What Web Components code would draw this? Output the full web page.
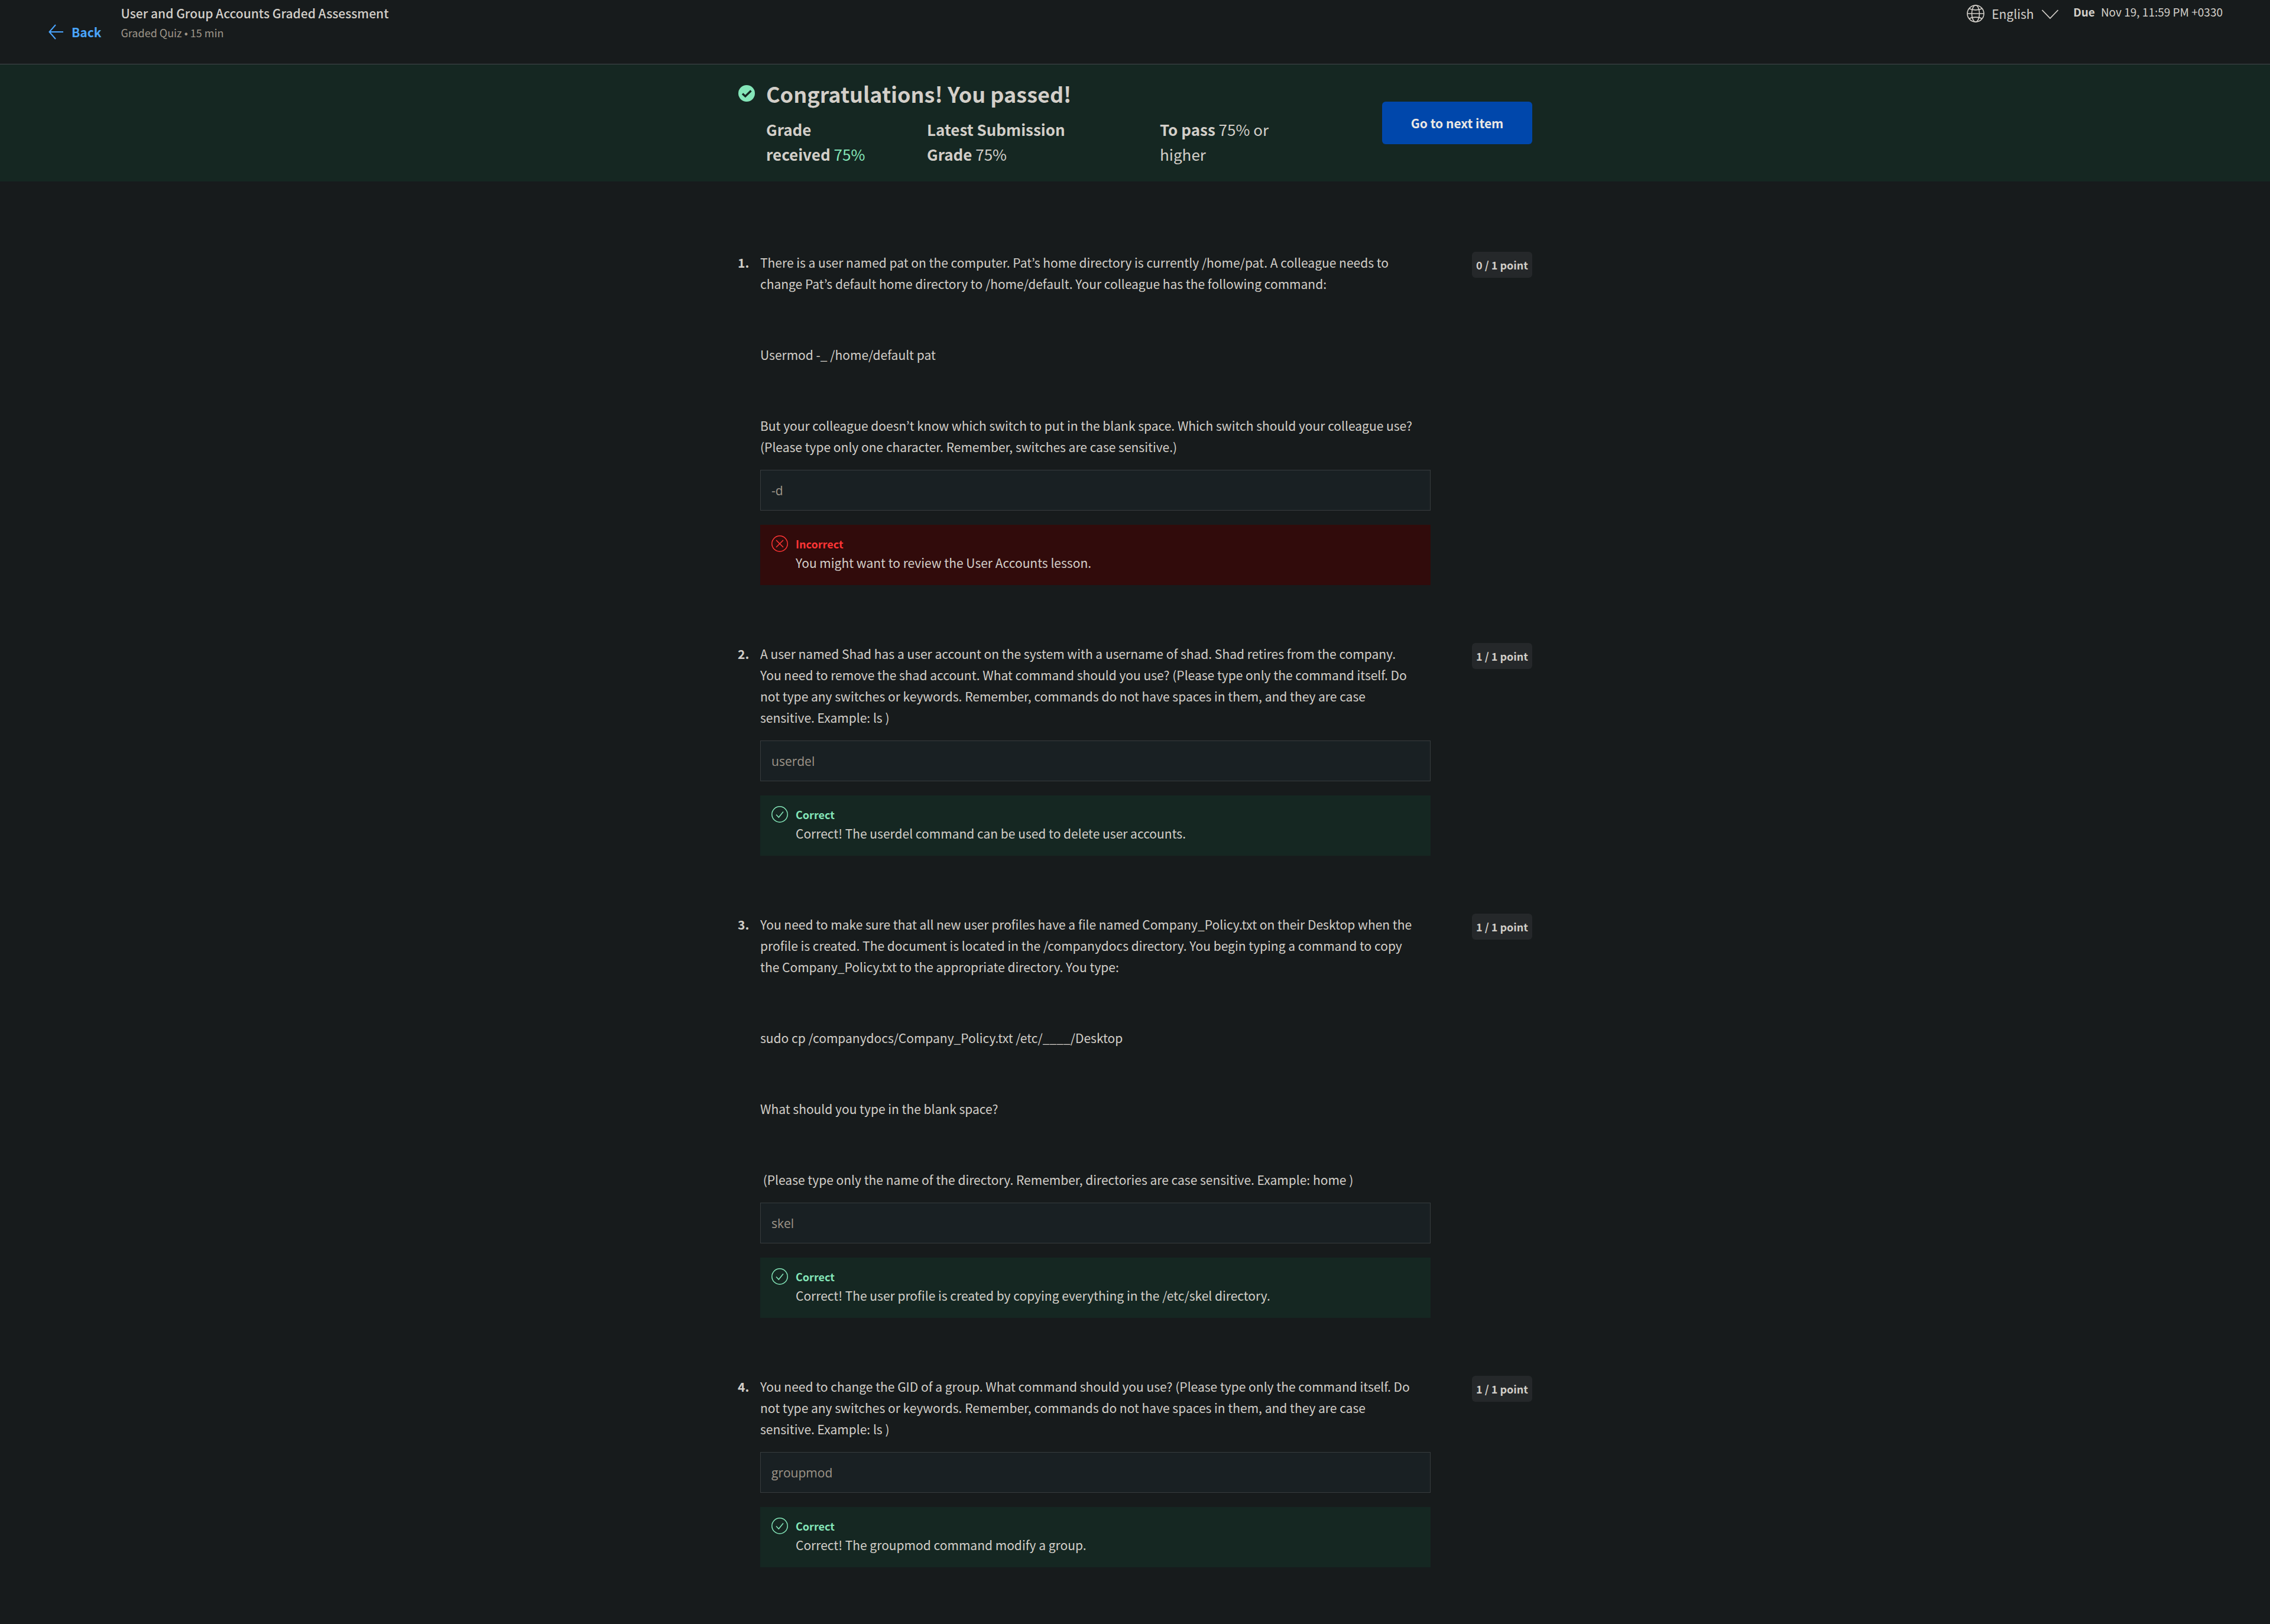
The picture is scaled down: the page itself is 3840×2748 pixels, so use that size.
<!DOCTYPE html>
<html lang="en">
<head>
<meta charset="utf-8">
<meta name="viewport" content="width=device-width, initial-scale=1">
<title>User and Group Accounts Graded Assessment</title>
<style>
  :root {
    --bg: #171b1c;
    --text: #d3cfc9;
    --muted: #9e9589;
    --link: #4aa5ff;
    --green: #84e6b9;
    --green-bg: #152722;
    --red: #ff3535;
    --red-bg: #310b0b;
    --line: #43484b;
    --field-bg: #192023;
    --field-line: #373c3e;
    --chip-bg: #25282a;
    --primary: #0047ab;
  }
  body {
    margin: 0;
    background: var(--bg);
    color: var(--text);
    font: 400 21px/36px "Noto Sans CJK KR", "Noto Sans", sans-serif;
  }
</style>
</head>
<body>
<quiz-header heading="User and Group Accounts Graded Assessment" detail="Graded Quiz • 15 min" due="Nov 19, 11:59 PM +0330"></quiz-header>
<main>
  <grade-banner heading="Congratulations! You passed!">
    <grade-stat lead="Grade" label="received" value="75%" tone="good"></grade-stat>
    <grade-stat lead="Latest Submission" label="Grade" value="75%"></grade-stat>
    <grade-stat label="To pass" value="75%" note="or higher"></grade-stat>
  </grade-banner>
  <quiz-list>
    <quiz-question number="1" points="0 / 1 point" answer="-d">
      <p>There is a user named pat on the computer. Pat’s home directory is currently /home/pat. A colleague needs to change Pat’s default home directory to /home/default. Your colleague has the following command:</p>
      <p>Usermod -_ /home/default pat</p>
      <p>But your colleague doesn’t know which switch to put in the blank space. Which switch should your colleague use? (Please type only one character. Remember, switches are case sensitive.)</p>
      <answer-feedback slot="feedback" state="incorrect">You might want to review the User Accounts lesson.</answer-feedback>
    </quiz-question>
    <quiz-question number="2" points="1 / 1 point" answer="userdel">
      <p>A user named Shad has a user account on the system with a username of shad. Shad retires from the company. You need to remove the shad account. What command should you use? (Please type only the command itself. Do not type any switches or keywords. Remember, commands do not have spaces in them, and they are case sensitive. Example: ls )</p>
      <answer-feedback slot="feedback" state="correct">Correct! The userdel command can be used to delete user accounts.</answer-feedback>
    </quiz-question>
    <quiz-question number="3" points="1 / 1 point" answer="skel">
      <p>You need to make sure that all new user profiles have a file named Company_Policy.txt on their Desktop when the profile is created. The document is located in the /companydocs directory. You begin typing a command to copy the Company_Policy.txt to the appropriate directory. You type:</p>
      <p>sudo cp /companydocs/Company_Policy.txt /etc/____/Desktop</p>
      <p>What should you type in the blank space?</p>
      <p>&nbsp;(Please type only the name of the directory. Remember, directories are case sensitive. Example: home )</p>
      <answer-feedback slot="feedback" state="correct">Correct! The user profile is created by copying everything in the /etc/skel directory.</answer-feedback>
    </quiz-question>
    <quiz-question number="4" points="1 / 1 point" answer="groupmod">
      <p>You need to change the GID of a group. What command should you use? (Please type only the command itself. Do not type any switches or keywords. Remember, commands do not have spaces in them, and they are case sensitive. Example: ls )</p>
      <answer-feedback slot="feedback" state="correct">Correct! The groupmod command modify a group.</answer-feedback>
    </quiz-question>
  </quiz-list>
</main>
<script>
  class BaseElement extends HTMLElement {
    connectedCallback() {
      if (this.shadowRoot) return;
      this.attachShadow({ mode: 'open' }).innerHTML =
        '<style>*{box-sizing:border-box}svg{display:block;flex:none;fill:none;stroke:currentColor}' +
        this.css() + '</style>' + this.html();
    }
    attr(name) { return this.getAttribute(name) || ''; }
  }

  customElements.define('quiz-header', class extends BaseElement {
    css() { return `
      :host { display: block; border-bottom: 1px solid var(--line); }
      header { display: flex; align-items: flex-start; min-height: 108px; padding: 5px 80px 0 82px; }
      .back { display: flex; align-items: center; gap: 14px; margin: 31px 33px 0 0;
        color: var(--link); font-weight: 700; text-decoration: none; }
      .titles { flex: 1; min-width: 0; }
      h1 { margin: 0; font-size: 21px; line-height: 34px; font-weight: 500; }
      .detail { margin: 0; font-size: 18px; line-height: 32px; color: var(--muted); }
      .language { display: flex; align-items: center; gap: 12px; margin-right: 24px; }
      select { appearance: none; border: 0; margin: 0; padding: 0; background: none;
        color: inherit; font: inherit; height: 36px; }
      .due { display: flex; gap: 10px; margin: 0; font-size: 19px; line-height: 30px; }
      .due dt { font-weight: 700; } .due dd { margin: 0; }`; }
    html() { return `
      <header>
        <a class="back" href="#back">
          <svg width="25" height="26" viewBox="0 0 25 26" stroke-width="2"><path d="M12 1 1.500 13 12 25M1.500 13H25"/></svg>
          Back
        </a>
        <div class="titles"><h1>${this.attr('heading')}</h1><p class="detail">${this.attr('detail')}</p></div>
        <label class="language">
          <svg width="30" height="30" viewBox="0 0 30 30" stroke-width="1.600" role="img" aria-label="Language">
            <circle cx="15" cy="15" r="14"/><ellipse cx="15" cy="15" rx="6.500" ry="14"/>
            <path d="M1 15h28M4 6.500c6 3.200 16 3.200 22 0M4 23.500c6-3.200 16-3.200 22 0"/>
          </svg>
          <select><option>English</option></select>
          <svg width="30" height="30" viewBox="0 0 30 30" stroke-width="1.800"><path d="M1.500 9 15 23 28.500 9"/></svg>
        </label>
        <dl class="due"><dt>Due</dt><dd>${this.attr('due')}</dd></dl>
      </header>`; }
  });

  customElements.define('grade-banner', class extends BaseElement {
    css() { return `
      :host { display: block; background: var(--green-bg); }
      section { display: flex; align-items: center; max-width: 1344px; margin: 0 auto; padding: 25px 0; }
      .result { flex: 1; display: grid; grid-template-columns: 30px 1fr; column-gap: 18px; row-gap: 16px; align-items: center; }
      svg { stroke: none; color: var(--green); }
      h2 { margin: 0; font-size: 36px; line-height: 48px; font-weight: 700; }
      .stats { grid-column: 2; display: grid; grid-template-columns: 224px 346px 200px; column-gap: 48px; }
      button { flex: none; min-width: 254px; height: 72px; padding: 0 48px; border: 0; border-radius: 6px; background: var(--primary);
        color: #ece8e4; font: inherit; font-weight: 700; }`; }
    html() { return `
      <section>
        <div class="result">
          <svg width="30" height="30" viewBox="0 0 30 30"><circle cx="15" cy="15" r="14" fill="currentColor"/>
            <path d="m8 15.500 4.800 4.500L22.500 10.500" fill="none" stroke="var(--green-bg)" stroke-width="3.400"/></svg>
          <h2>${this.attr('heading')}</h2>
          <div class="stats"><slot></slot></div>
        </div>
        <button type="button">Go to next item</button>
      </section>`; }
  });

  customElements.define('grade-stat', class extends BaseElement {
    css() { return `
      :host { display: block; font-size: 26px; line-height: 42px; }
      b { font-weight: 700; }
      :host([tone="good"]) span { color: var(--green); }`; }
    html() {
      const lead = this.attr('lead');
      return `${lead ? `<b>${lead}</b> ` : ''}<b>${this.attr('label')}</b>&nbsp;<span>${this.attr('value')}</span> ${this.attr('note')}`;
    }
  });

  customElements.define('quiz-list', class extends BaseElement {
    css() { return `
      :host { display: flex; flex-direction: column; gap: 98px; max-width: 1344px; margin: 0 auto; padding: 119px 0 96px; }`; }
    html() { return '<slot></slot>'; }
  });

  customElements.define('quiz-question', class extends BaseElement {
    css() { return `
      :host { display: grid; grid-template-columns: 38px minmax(0, 1fr) auto; }
      .number { font-weight: 700; }
      .prompt { display: flex; flex-direction: column; gap: 84px; padding-right: 24px; }
      .prompt ::slotted(p) { margin: 0; }
      input { display: block; width: 100%; height: 69px; margin: 21px 0 24px; padding: 0 18px;
        border: 1px solid var(--field-line); border-radius: 0; background: var(--field-bg);
        color: var(--muted); font: 400 21px "Open Sans", sans-serif; }
      .points { align-self: start; margin-left: 70px; width: 102px; text-align: center; border-radius: 6px;
        background: var(--chip-bg); font-size: 18px; line-height: 44px; font-weight: 700; }`; }
    html() { return `
      <div class="number">${this.attr('number')}.</div>
      <div>
        <div class="prompt" id="prompt"><slot></slot></div>
        <input type="text" aria-labelledby="prompt" value="${this.attr('answer')}" readonly>
        <slot name="feedback"></slot>
      </div>
      <div class="points">${this.attr('points')}</div>`; }
  });

  customElements.define('answer-feedback', class extends BaseElement {
    css() { return `
      :host { display: flex; gap: 13px; padding: 18px 19px 20px; background: var(--green-bg); --tone: var(--green); }
      :host([state="incorrect"]) { background: var(--red-bg); --tone: var(--red); }
      svg { color: var(--tone); }
      strong { display: block; color: var(--tone); font-size: 18px; line-height: 28px; font-weight: 700; }`; }
    html() {
      const ok = this.attr('state') === 'correct';
      return `
      <svg width="28" height="28" viewBox="0 0 28 28" stroke-width="1.500"><circle cx="14" cy="14" r="13.200"/>
        <path d="${ok ? 'm8 14.500 4.300 4.500L20 9.500' : 'm8 8 12 12M20 8 8 20'}"/></svg>
      <div><strong>${ok ? 'Correct' : 'Incorrect'}</strong><slot></slot></div>`;
    }
  });
</script>
</body>
</html>
